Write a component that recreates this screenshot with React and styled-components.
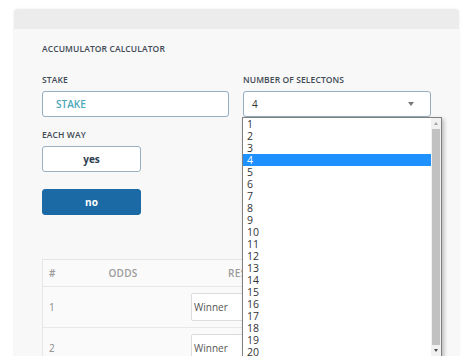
import styled, { createGlobalStyle } from "styled-components";

const GlobalStyle = createGlobalStyle`
  html, body {
    margin: 0;
    padding: 0;
    background: #ffffff;
    overflow: hidden;
  }
  * { box-sizing: border-box; }
`;

const Card = styled.div`
  margin: 9px 15px 0 14px;
  border-radius: 4px;
  overflow: hidden;
  box-shadow: 0 0 3px rgba(0, 0, 0, 0.08);
  background: #f8f8f8;
  height: 400px;
`;

const CardHeader = styled.div`
  height: 20px;
  background: #ececec;
`;

const CardBody = styled.div`
  padding: 14px 28px 0 28px;
  font-family: "Open Sans", sans-serif;
`;

const Title = styled.div`
  font-size: 8.5px;
  font-weight: 600;
  line-height: 12px;
  color: #3f4a55;
  letter-spacing: 0.1px;
  margin-bottom: 19px;
`;

const FieldGrid = styled.div`
  display: grid;
  grid-template-columns: 187px 188px;
  column-gap: 14px;
`;

const Field = styled.div`
  position: relative;
  display: flex;
  flex-direction: column;
`;

const Label = styled.div`
  font-size: 8.5px;
  font-weight: 600;
  line-height: 12px;
  color: #3f4a55;
  letter-spacing: 0.1px;
  margin-bottom: 5px;
`;

const Input = styled.div`
  height: 26px;
  border: 1.5px solid #95aebf;
  border-radius: 3px;
  background: #ffffff;
  display: flex;
  align-items: center;
  justify-content: space-between;
  padding: 0 16px 0 ${(p) => p.$pad || 13}px;
  font-size: 10px;
  font-weight: ${(p) => (p.$placeholder ? 600 : 400)};
  color: ${(p) => (p.$placeholder ? "#4aa8b8" : "#333333")};
`;

const Caret = styled.span`
  width: 0;
  height: 0;
  border-left: 3px solid transparent;
  border-right: 3px solid transparent;
  border-top: 4px solid #777777;
`;

const EachWay = styled.div`
  margin-top: 12px;
  display: flex;
  flex-direction: column;
  align-items: flex-start;
`;

const Toggle = styled.div`
  width: 99px;
  height: 26px;
  border-radius: 3px;
  border: 1.5px solid ${(p) => (p.$active ? "#1b6aa5" : "#9ab0c0")};
  background: ${(p) => (p.$active ? "#1b6aa5" : "#ffffff")};
  color: ${(p) => (p.$active ? "#ffffff" : "#2c3e50")};
  font-size: 10px;
  font-weight: 700;
  display: flex;
  align-items: center;
  justify-content: center;
  margin-bottom: 17px;
`;

const Table = styled.div`
  margin-top: 27px;
  width: 389px;
  border: 1px solid #e6e6e6;
  background: #fafafa;
`;

const Row = styled.div`
  display: grid;
  grid-template-columns: 40px 98px 132px 1fr;
  height: ${(p) => (p.$head ? 26 : 41)}px;
  border-top: ${(p) => (p.$head ? "none" : "1px solid #e8e8e8")};
  align-items: center;
`;

const HeadCell = styled.div`
  font-size: 10px;
  font-weight: 600;
  color: #9a9a9a;
  letter-spacing: 0.3px;
  padding-left: ${(p) => (p.$left ? 6 : 0)}px;
  padding-right: ${(p) => p.$pr || 0}px;
  text-align: ${(p) => (p.$left ? "left" : "center")};
`;

const Cell = styled.div`
  font-size: 10px;
  color: #8a8a8a;
  padding-left: ${(p) => p.$pl || 0}px;
`;

const ResultSelect = styled.div`
  height: 28px;
  width: 120px;
  border: 1px solid #dcdcdc;
  border-radius: 2px;
  background: #ffffff;
  display: flex;
  align-items: center;
  padding-left: 2px;
  font-size: 10px;
  color: #555555;
`;

const Dropdown = styled.div`
  position: absolute;
  top: 100%;
  left: -1px;
  width: 200px;
  height: 240px;
  display: flex;
  background: #ffffff;
  border: 1px solid #808080;
  box-shadow: 2px 2px 4px rgba(0, 0, 0, 0.25);
  z-index: 5;
  overflow: hidden;
`;

const OptionList = styled.div`
  flex: 1;
  display: flex;
  flex-direction: column;
`;

const Option = styled.div`
  height: 12px;
  flex: none;
  line-height: 12px;
  padding-left: 4px;
  font-family: "Open Sans", sans-serif;
  font-size: 10.5px;
  color: ${(p) => (p.$selected ? "#ffffff" : "#333333")};
  background: ${(p) => (p.$selected ? "#1e90ff" : "transparent")};
`;

const Scrollbar = styled.div`
  width: 10px;
  background: #f1f1f1;
  display: flex;
  flex-direction: column;
  align-items: center;
`;

const ScrollArrow = styled.div`
  height: 11px;
  display: flex;
  align-items: center;
  justify-content: center;
`;

const ScrollThumb = styled.div`
  flex: 1;
  width: 8px;
  background: #c1c1c1;
`;

const TriUp = styled.span`
  border-left: 2.5px solid transparent;
  border-right: 2.5px solid transparent;
  border-bottom: 3px solid ${(p) => p.$color || "#a3a3a3"};
`;

const TriDown = styled.span`
  border-left: 2.5px solid transparent;
  border-right: 2.5px solid transparent;
  border-top: 3px solid ${(p) => p.$color || "#505050"};
`;

const options = Array.from({ length: 20 }, (_, i) => i + 1);

export default function App() {
  return (
    <>
      <GlobalStyle />
      <Card>
        <CardHeader />
        <CardBody>
          <Title>ACCUMULATOR CALCULATOR</Title>
          <FieldGrid>
            <Field>
              <Label>STAKE</Label>
              <Input $placeholder>STAKE</Input>
            </Field>
            <Field>
              <Label>NUMBER OF SELECTONS</Label>
              <Input $pad={8}>
                4
                <Caret />
              </Input>
              <Dropdown>
                <OptionList>
                  {options.map((n) => (
                    <Option key={n} $selected={n === 4}>
                      {n}
                    </Option>
                  ))}
                </OptionList>
                <Scrollbar>
                  <ScrollArrow>
                    <TriUp />
                  </ScrollArrow>
                  <ScrollThumb />
                  <ScrollArrow>
                    <TriDown />
                  </ScrollArrow>
                </Scrollbar>
              </Dropdown>
            </Field>
          </FieldGrid>
          <EachWay>
            <Label>EACH WAY</Label>
            <Toggle>yes</Toggle>
            <Toggle $active>no</Toggle>
          </EachWay>
          <Table>
            <Row $head>
              <HeadCell $left>#</HeadCell>
              <HeadCell $pr={18}>ODDS</HeadCell>
              <HeadCell>RESULT</HeadCell>
              <HeadCell>RETURN</HeadCell>
            </Row>
            {[1, 2].map((n) => (
              <Row key={n}>
                <Cell $pl={6}>{n}</Cell>
                <Cell />
                <Cell $pl={10}>
                  <ResultSelect>Winner</ResultSelect>
                </Cell>
                <Cell />
              </Row>
            ))}
          </Table>
        </CardBody>
      </Card>
    </>
  );
}
